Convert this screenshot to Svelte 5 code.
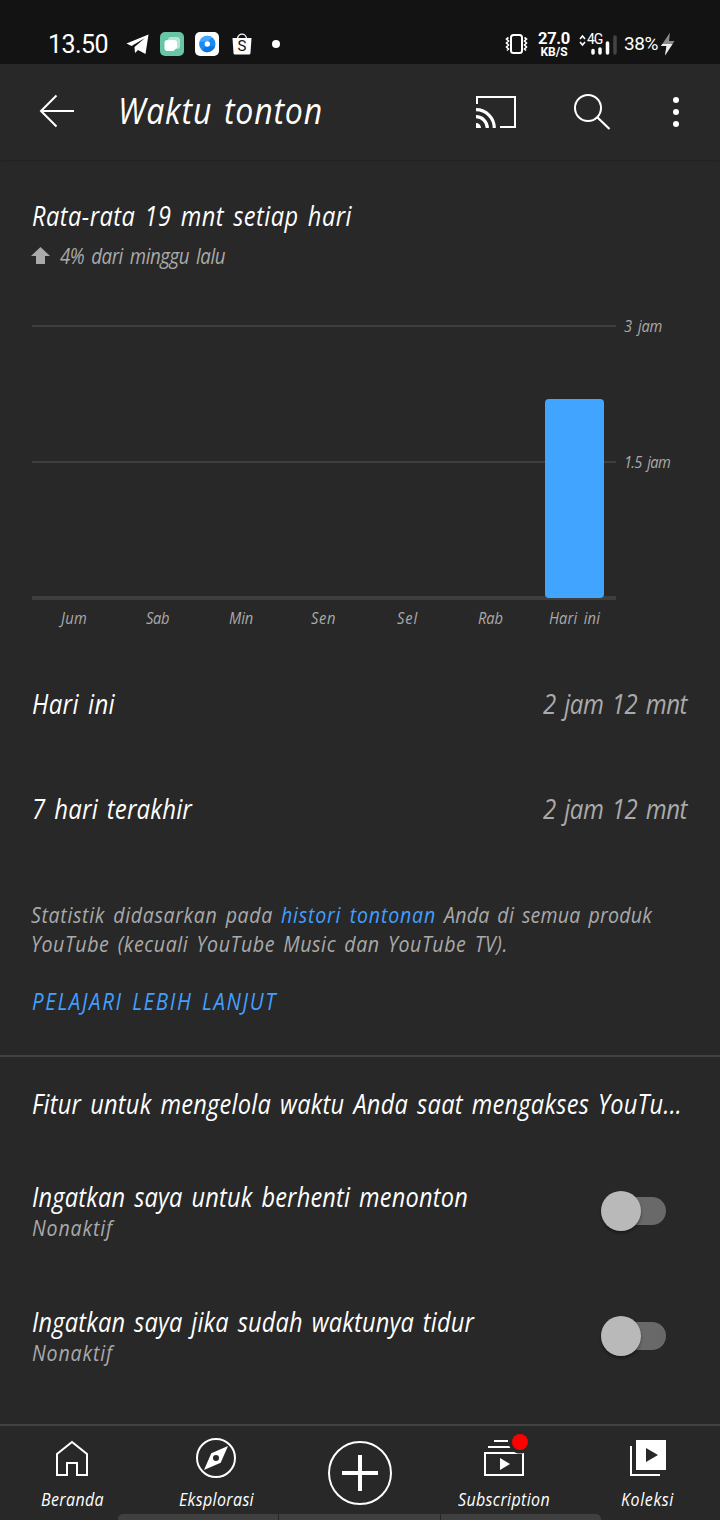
<script>
  const days = [
    { label: 'Jum', width: 26, value: 0 },
    { label: 'Sab', width: 23, value: 0 },
    { label: 'Min', width: 24, value: 0 },
    { label: 'Sen', width: 25, value: 0 },
    { label: 'Sel', width: 21, value: 0 },
    { label: 'Rab', width: 25, value: 0 },
    { label: 'Hari ini', width: 51, value: 199 }
  ];
  const totals = [
    { label: 'Hari ini', width: 83 },
    { label: '7 hari terakhir', width: 160 }
  ];
  const reminders = [
    { label: 'Ingatkan saya untuk berhenti menonton', width: 436 },
    { label: 'Ingatkan saya jika sudah waktunya tidur', width: 442 }
  ];

  // Spreads the letters of a line so that it takes the given width.
  function fit(node, width) {
    const natural = node.getBoundingClientRect().width;
    const count = node.textContent.length;
    node.style.letterSpacing = `${(width - natural) / count}px`;
  }

  // Condenses the glyphs, then spreads them over the given width.
  const condense = 0.89;
  function narrow(node, width) {
    const full = width / condense;
    fit(node, full);
    node.style.transform = `scaleX(${condense})`;
    node.style.marginRight = `${width - full}px`;
  }
</script>

<div class="screen">
  <div class="status">
    <span class="time"><span class="t" use:fit={60}>13.50</span></span>
    <svg class="tele" width="23" height="21" viewBox="0 0 23 21"><path d="M22.5.5 19.5 20 12 16l-3 3-.5-6L19 4 5.500 12 .5 9.500Z" fill="#fff" /></svg>
    <svg class="app1" width="24" height="24" viewBox="0 0 24 24"><rect width="24" height="24" rx="5" fill="#66c6a6" /><rect x="8" y="5" width="12" height="12" rx="3" fill="#b5e5d5" /><path d="M7.500 8H14a3 3 0 0 1 3 3v4.500L13.500 19H7.500A3 3 0 0 1 4.500 16v-5a3 3 0 0 1 3-3Z" fill="#fff" /></svg>
    <svg class="app2" width="24" height="24" viewBox="0 0 24 24"><rect width="24" height="24" rx="5" fill="#fff" /><circle cx="12.300" cy="12" r="8.200" fill="#188cf3" /><path d="M4.500 10a8.200 8.200 0 0 1 13-4.500L13 9Z" fill="#45a9ff" /><path d="M20 14.500A8.200 8.200 0 0 1 7 18.300L12 14Z" fill="#0877e6" /><circle cx="12.300" cy="12" r="2.700" fill="#fff" /></svg>
    <span class="bag">
      <svg width="20" height="22" viewBox="0 0 20 22"><path d="M5.500 6C5.500-.5 14.500-.5 14.500 6" fill="none" stroke="#fff" stroke-width="1.300" /><path d="M.5 5h19L18.500 20q-.1 1.500-1.500 1.500H3q-1.400 0-1.500-1.500Z" fill="#fff" /></svg>
      <span class="bag-letter">S</span>
    </span>
    <span class="dot"></span>

    <svg class="vibrate" width="23" height="20" viewBox="0 0 23 20"><rect x="6" y="1" width="11" height="18" rx="2.500" fill="none" stroke="#fff" stroke-width="2" /><path d="M3.500 3.500 1.500 5l2 2-2 2 2 2-2 2 2 2-1.500 1.500M19.500 3.500l2 1.500-2 2 2 2-2 2 2 2-2 2 1.500 1.500" fill="none" stroke="#fff" stroke-width="1.600" /></svg>
    <span class="speed"><b class="rate"><span class="t" use:fit={32}>27.0</span></b><b class="unit"><span class="t" use:fit={27}>KB/S</span></b></span>
    <span class="signal">
      <svg width="39" height="21" viewBox="0 0 39 21"><path d="m1 5 2.500-3L6 5M1 8l2.500 3L6 8" fill="none" stroke="#fff" stroke-width="1.600" /><path d="M14 16.500v2.500M21 15v4M28.500 9v10" stroke="#fff" stroke-width="3.500" stroke-linecap="round" /><path d="M36 3v16" stroke="#444" stroke-width="3.500" stroke-linecap="round" /></svg>
      <span class="gen">4G</span>
    </span>
    <span class="battery"><span class="t" use:fit={34}>38%</span></span>
    <svg class="bolt" width="14" height="24" viewBox="0 0 14 24"><path d="M9 .5 0 14h5.500L4 23.500 13.500 9H8Z" fill="#8b8b8b" /><path d="M0 14 1.300 12H11.500L4 23.500 5.500 14Z" fill="#eee" /></svg>
  </div>

  <header>
    <svg class="back" width="36" height="34" viewBox="0 0 36 34"><path d="M17.500 1.500 2 17l15.500 15.500M2 17h33" fill="none" stroke="#fff" stroke-width="2" /></svg>
    <h1><span class="t" use:narrow={205}>Waktu tonton</span></h1>
    <svg class="cast" width="42" height="34" viewBox="0 0 42 34"><path d="M2 9V2h38v30H25" fill="none" stroke="#fff" stroke-width="2" /><path d="M1 14.700A18.300 18.300 0 0 1 19.300 33M1 21.700A11.300 11.300 0 0 1 12.300 33" fill="none" stroke="#fff" stroke-width="3.200" /><path d="M1 28a5 5 0 0 1 5 5H1Z" fill="#fff" /></svg>
    <svg class="search" width="38" height="38" viewBox="0 0 38 38"><circle cx="15" cy="15" r="13" fill="none" stroke="#fff" stroke-width="2" /><path d="m24 24 12.500 12" stroke="#fff" stroke-width="2.200" /></svg>
    <svg class="more" width="8" height="32" viewBox="0 0 8 32"><g fill="#fff"><circle cx="4" cy="4" r="3" /><circle cx="4" cy="16" r="3" /><circle cx="4" cy="28" r="3" /></g></svg>
  </header>

  <main>
    <h2><span class="t" use:narrow={320}>Rata-rata 19 mnt setiap hari</span></h2>
    <p class="trend">
      <svg width="20" height="18" viewBox="0 0 20 18"><path d="m9.500 0 9.500 9h-5v8H5V9H0Z" fill="#aaa" /></svg>
      <span class="t" use:narrow={165}>4% dari minggu lalu</span>
    </p>

    <div class="chart">
      <div class="lines">
        <div class="line"><i></i><span class="t" use:narrow={38}>3 jam</span></div>
        <div class="line"><i></i><span class="t" use:narrow={46}>1.5 jam</span></div>
        <div class="base"></div>
      </div>
      <div class="bars">
        {#each days as day}
          <div class="slot">{#if day.value}<div class="bar" style="height: {day.value}px"></div>{/if}</div>
        {/each}
      </div>
    </div>
    <div class="days">
      {#each days as day}<span><span class="t" use:narrow={day.width}>{day.label}</span></span>{/each}
    </div>

    <div class="totals">
      {#each totals as row}
        <div class="total"><span class="t" use:narrow={row.width}>{row.label}</span><span class="t amount" use:narrow={144}>2 jam 12 mnt</span></div>
      {/each}
    </div>

    <div class="note">
      <div><span class="t" use:narrow={242}>Statistik didasarkan pada</span><span class="t link" use:narrow={155}>histori tontonan</span><span class="t" use:narrow={208}>Anda di semua produk</span></div>
      <div><span class="t" use:narrow={477}>YouTube (kecuali YouTube Music dan YouTube TV).</span></div>
    </div>
    <div class="learn link"><span class="t" use:narrow={245}>PELAJARI LEBIH LANJUT</span></div>
  </main>

  <section>
    <h3><span class="t" use:narrow={650}>Fitur untuk mengelola waktu Anda saat mengakses YouTu...</span></h3>
    {#each reminders as item}
      <div class="reminder">
        <div>
          <div class="name"><span class="t" use:narrow={item.width}>{item.label}</span></div>
          <div class="state"><span class="t" use:narrow={81}>Nonaktif</span></div>
        </div>
        <div class="switch"><i></i></div>
      </div>
    {/each}
  </section>

  <nav>
    <div class="tab">
      <svg width="44" height="44" viewBox="0 0 44 44"><path d="M7 37V16L22 4l15 12v21H27V25H17v12Z" fill="none" stroke="#fff" stroke-width="2" /></svg>
      <span class="t" use:narrow={63}>Beranda</span>
    </div>
    <div class="tab">
      <svg width="44" height="44" viewBox="0 0 44 44"><circle cx="22" cy="20" r="19" fill="none" stroke="#fff" stroke-width="2" /><path fill-rule="evenodd" d="M34 8 26.700 24.700 10 32l7.300-16.700ZM22 17a3 3 0 1 0 0 6 3 3 0 0 0 0-6Z" fill="#fff" /></svg>
      <span class="t" use:narrow={75}>Eksplorasi</span>
    </div>
    <div class="tab create">
      <svg width="66" height="66" viewBox="0 0 66 66"><circle cx="33" cy="33" r="31" fill="none" stroke="#fff" stroke-width="2" /><path d="M33 15v36M15 33h36" stroke="#fff" stroke-width="4" /></svg>
    </div>
    <div class="tab">
      <svg width="44" height="44" viewBox="0 0 44 44"><path d="M12 3h14M6 9h25M3 15h38v22H3Z" fill="none" stroke="#fff" stroke-width="2" /><path d="m18 20 10 6-10 6Z" fill="#fff" /><circle cx="38" cy="4" r="11.500" fill="#282828" /><circle cx="38" cy="4" r="8" fill="#f00" /></svg>
      <span class="t" use:narrow={92}>Subscription</span>
    </div>
    <div class="tab">
      <svg width="44" height="44" viewBox="0 0 44 44"><path d="M5 8v29h29" fill="none" stroke="#fff" stroke-width="2" /><path fill-rule="evenodd" d="M10 2h30v30H10Zm10 8v14l12-7Z" fill="#fff" /></svg>
      <span class="t" use:narrow={53}>Koleksi</span>
    </div>
    <div class="handle"><i></i><i></i><i></i></div>
  </nav>
</div>

<style>
  :global(body) { background: #282828; }
  .screen {
    width: 720px; height: 1520px; overflow: hidden; display: flex; flex-direction: column;
    background: #282828; color: #fff; font-family: 'Open Sans', 'Noto Sans', sans-serif; font-style: italic; word-spacing: .18em;
  }
  .screen * { box-sizing: border-box; }
  svg { display: block; flex: none; overflow: visible; }
  h1, h2, h3, p { margin: 0; font-weight: 400; }
  h1, h2, h3, .name, .total, .tab { font-weight: 500; }
  .t { display: inline-block; white-space: pre; flex: none; transform-origin: left center; }
  .amount { font-weight: 400; color: #aaa; }
  .link { color: #419fff; }

  .status { height: 64px; padding: 24px 0 0 48px; display: flex; align-items: center; background: #131313; font-family: Roboto, sans-serif; font-style: normal; flex: none; }
  .time { width: 60px; font-size: 25px; line-height: 30px; padding-top: 2px; }
  .tele { margin-left: 18px; }
  .app1, .app2 { margin-left: 11px; }
  .bag { position: relative; width: 20px; height: 22px; margin-left: 13px; }
  .bag-letter { position: absolute; left: 5px; top: 5px; width: 10px; text-align: center; font-size: 15px; line-height: 17px; color: #131313; }
  .dot { width: 8px; height: 8px; border-radius: 50%; background: #fff; margin-left: 20px; }
  .vibrate { margin-left: 225px; }
  .speed { width: 32px; margin-left: 10px; display: flex; flex-direction: column; align-items: center; }
  .rate { height: 14px; font-size: 16.500px; line-height: 14px; }
  .unit { height: 11px; font-size: 12px; line-height: 12px; }
  .signal { position: relative; width: 39px; height: 21px; margin-left: 9px; }
  .gen { position: absolute; left: 8px; top: -3px; font-size: 14px; line-height: 16px; letter-spacing: -1px; }
  .battery { width: 34px; margin-left: 6px; font-size: 19px; line-height: 24px; }
  .bolt { margin-left: 3px; }

  header { height: 96px; flex: none; display: flex; align-items: center; padding-left: 39px; box-shadow: 0 1px 2px #202020; }
  header h1 { width: 357px; margin-left: 43px; font-size: 36px; line-height: 48px; margin-top: -2px; }
  .back { margin-top: -2px; }
  .search { margin-left: 56px; }
  .more { margin-left: 61px; }

  main { padding: 36px 33px 39px 32px; }
  h2 { height: 40px; font-size: 26.500px; line-height: 40px; }
  .trend { height: 30px; margin-top: 5px; margin-left: -1px; display: flex; align-items: center; gap: 9px; font-size: 21px; line-height: 30px; color: #aaa; }
  .chart { display: grid; margin-top: 39px; height: 290px; }
  .lines, .bars { grid-area: 1 / 1; }
  .lines { display: flex; flex-direction: column; gap: 104px; }
  .line { height: 32px; display: flex; align-items: center; gap: 8px; font-size: 16.500px; line-height: 24px; color: #aaa; }
  .line i { width: 584px; height: 2px; background: #3e3e3e; }
  .base { width: 584px; height: 4px; margin-top: 14px; background: #3e3e3e; }
  .bars { width: 584px; display: grid; grid-template-columns: repeat(7, 1fr); align-items: end; padding-bottom: 2px; z-index: 1; }
  .slot { display: flex; justify-content: center; }
  .bar { width: 59px; border-radius: 4px; background: #41a4ff; }
  .days { width: 584px; display: grid; grid-template-columns: repeat(7, 1fr); margin-top: 6px; height: 24px; text-align: center; font-size: 16.500px; line-height: 24px; color: #aaa; }
  .totals { margin-top: 21px; font-size: 27px; line-height: 36px; }
  .total { height: 105px; display: flex; align-items: center; justify-content: space-between; }
  .note { margin-top: 39px; font-size: 22px; line-height: 29px; color: #aaa; }
  .note > div { height: 29px; display: flex; gap: 8px; }
  .note > div { margin-left: -1px; }
  .learn { margin-top: 28px; height: 30px; font-size: 23px; line-height: 30px; }

  section { border-top: 2px solid #424242; padding: 27px 32px 0; }
  h3 { height: 40px; margin-bottom: 24px; font-size: 26.500px; line-height: 40px; }
  .reminder { height: 125px; display: flex; align-items: center; justify-content: space-between; }
  .name { height: 32px; font-size: 26.500px; line-height: 35px; }
  .state { height: 30px; font-size: 22px; line-height: 30px; color: #aaa; }
  .switch { width: 61px; height: 28px; margin-right: 22px; border-radius: 14px; background: #696969; display: flex; align-items: center; }
  .switch i { width: 40px; height: 40px; flex: none; margin-left: -4px; border-radius: 50%; background: #b9b9b9; box-shadow: 0 2px 3px #0006; }

  nav { position: relative; height: 96px; flex: none; margin-top: auto; border-top: 2px solid #424242; display: grid; grid-template-columns: repeat(5, 1fr); font-size: 18px; line-height: 24px; }
  .tab { display: flex; flex-direction: column; align-items: center; padding-top: 12px; gap: 5px; }
  .create { padding-top: 14px; }
  .handle { position: absolute; left: 118px; bottom: 0; width: 483px; height: 6px; display: flex; gap: 1px; border-radius: 5px 5px 0 0; overflow: hidden; }
  .handle i { flex: 1; background: #404040; }
</style>
